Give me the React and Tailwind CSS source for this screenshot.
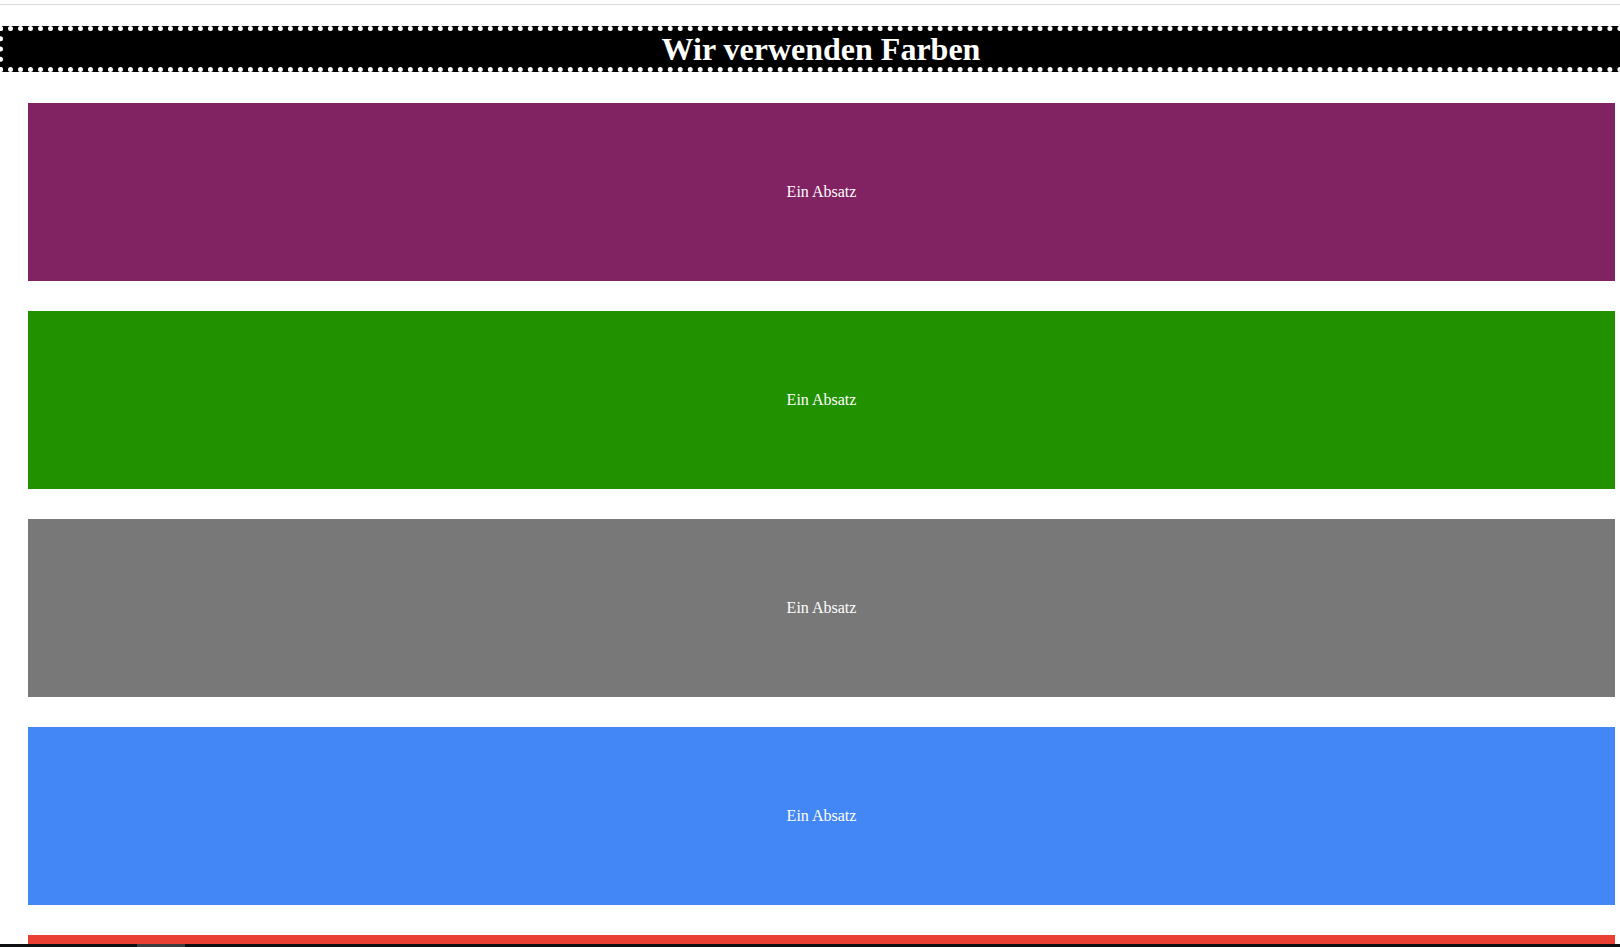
const boxes = [
  { id: 1, color: "bg-[#812262]" },
  { id: 2, color: "bg-[#229100]" },
  { id: 3, color: "bg-[#787878]" },
  { id: 4, color: "bg-[#4287f5]" },
  { id: 5, color: "bg-[#ea4034]" },
];

const App = () => {
  return (
    <div className="relative w-full h-[947px] overflow-hidden bg-white font-['Liberation_Serif','Times_New_Roman',serif]">
      {/* top hairline */}
      <div className="h-[4px]" />
      <div className="h-px bg-[#dcdcdc]" />

      {/* Header */}
      <h1 className="mt-[21px] -ml-[2px] w-[1646px] h-[46px] bg-black border-[5px] border-dotted border-white flex items-center justify-center text-white text-[32px] font-bold leading-none">
        Wir verwenden Farben
      </h1>

      {/* Colour blocks */}
      <div className="mt-[31px] flex flex-col gap-[30px]">
        {boxes.map((box) => (
          <p
            key={box.id}
            className={`ml-[28px] w-[1587px] h-[178px] shrink-0 flex items-center justify-center text-white text-[16px] ${box.color}`}
          >
            Ein Absatz
          </p>
        ))}
      </div>

      {/* horizontal scrollbar */}
      <div className="absolute left-0 bottom-0 w-full h-[3px] bg-[#0f1012]">
        <div className="absolute left-[137px] top-0 w-[48px] h-[3px] bg-[#3c3c3e]" />
      </div>
    </div>
  );
};

export default App;
